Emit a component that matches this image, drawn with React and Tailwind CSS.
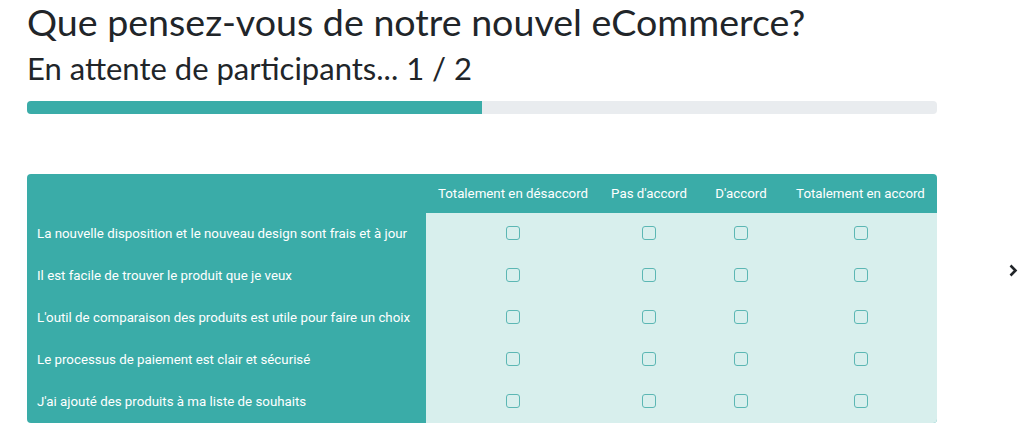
import React from 'react';

const cols = ['Totalement en désaccord', "Pas d'accord", "D'accord", 'Totalement en accord'];
const colWidths = ['w-[174px]', 'w-[98px]', 'w-[86px]', 'w-[153px]'];
const rows = [
  'La nouvelle disposition et le nouveau design sont frais et à jour',
  'Il est facile de trouver le produit que je veux',
  "L'outil de comparaison des produits est utile pour faire un choix",
  'Le processus de paiement est clair et sécurisé',
  "J'ai ajouté des produits à ma liste de souhaits",
];

const App = () => {
  return (
    <div className="relative w-[1024px] h-[444px] overflow-hidden bg-white">
      <div className="pl-[27px] w-[937px]">
        <h1 className="font-['Lato',sans-serif] text-[37.6px] leading-[42px] text-[#212529] pt-[1px]">
          Que pensez-vous de notre nouvel eCommerce?
        </h1>
        <h2 className="font-['Lato',sans-serif] text-[31px] leading-[36px] text-[#212529] mt-[7px]">
          En attente de participants... 1 / 2
        </h2>
        <div className="mt-[15px] h-[13px] w-[910px] rounded bg-[#e9ecef] overflow-hidden">
          <div className="h-full w-1/2 bg-[#3aaca8]" />
        </div>

        <div className="mt-[60px] w-[910px] rounded overflow-hidden bg-[#3aaca8]">
          <table className="w-full table-fixed border-collapse font-['Roboto',sans-serif] text-white">
            <thead>
              <tr className="h-[39px]">
                <th className="w-[399px]" />
                {cols.map((c, i) => (
                  <th key={c} className={`${colWidths[i]} text-[13.3px] font-normal text-center whitespace-nowrap`}>
                    {c}
                  </th>
                ))}
              </tr>
            </thead>
            <tbody>
              {rows.map((r) => (
                <tr key={r} className="h-[42px]">
                  <td className="pl-[10px] text-[13.3px] text-left whitespace-nowrap">{r}</td>
                  {cols.map((c) => (
                    <td key={c} className="bg-[#d8efed]">
                      <div className="flex justify-center items-center -mt-[2px]">
                        <span className="block w-[14px] h-[14px] rounded-[3px] border-[1.5px] border-[#5cb7b4]" />
                      </div>
                    </td>
                  ))}
                </tr>
              ))}
            </tbody>
          </table>
        </div>
      </div>

      <svg className="absolute left-[1008px] top-[264px]" width="10" height="13" viewBox="0 0 10 13">
        <path d="M2.5 1.5 L7.5 6.5 L2.5 11.5" fill="none" stroke="#212529" strokeWidth="2.6" />
      </svg>
    </div>
  );
};

export default App;
